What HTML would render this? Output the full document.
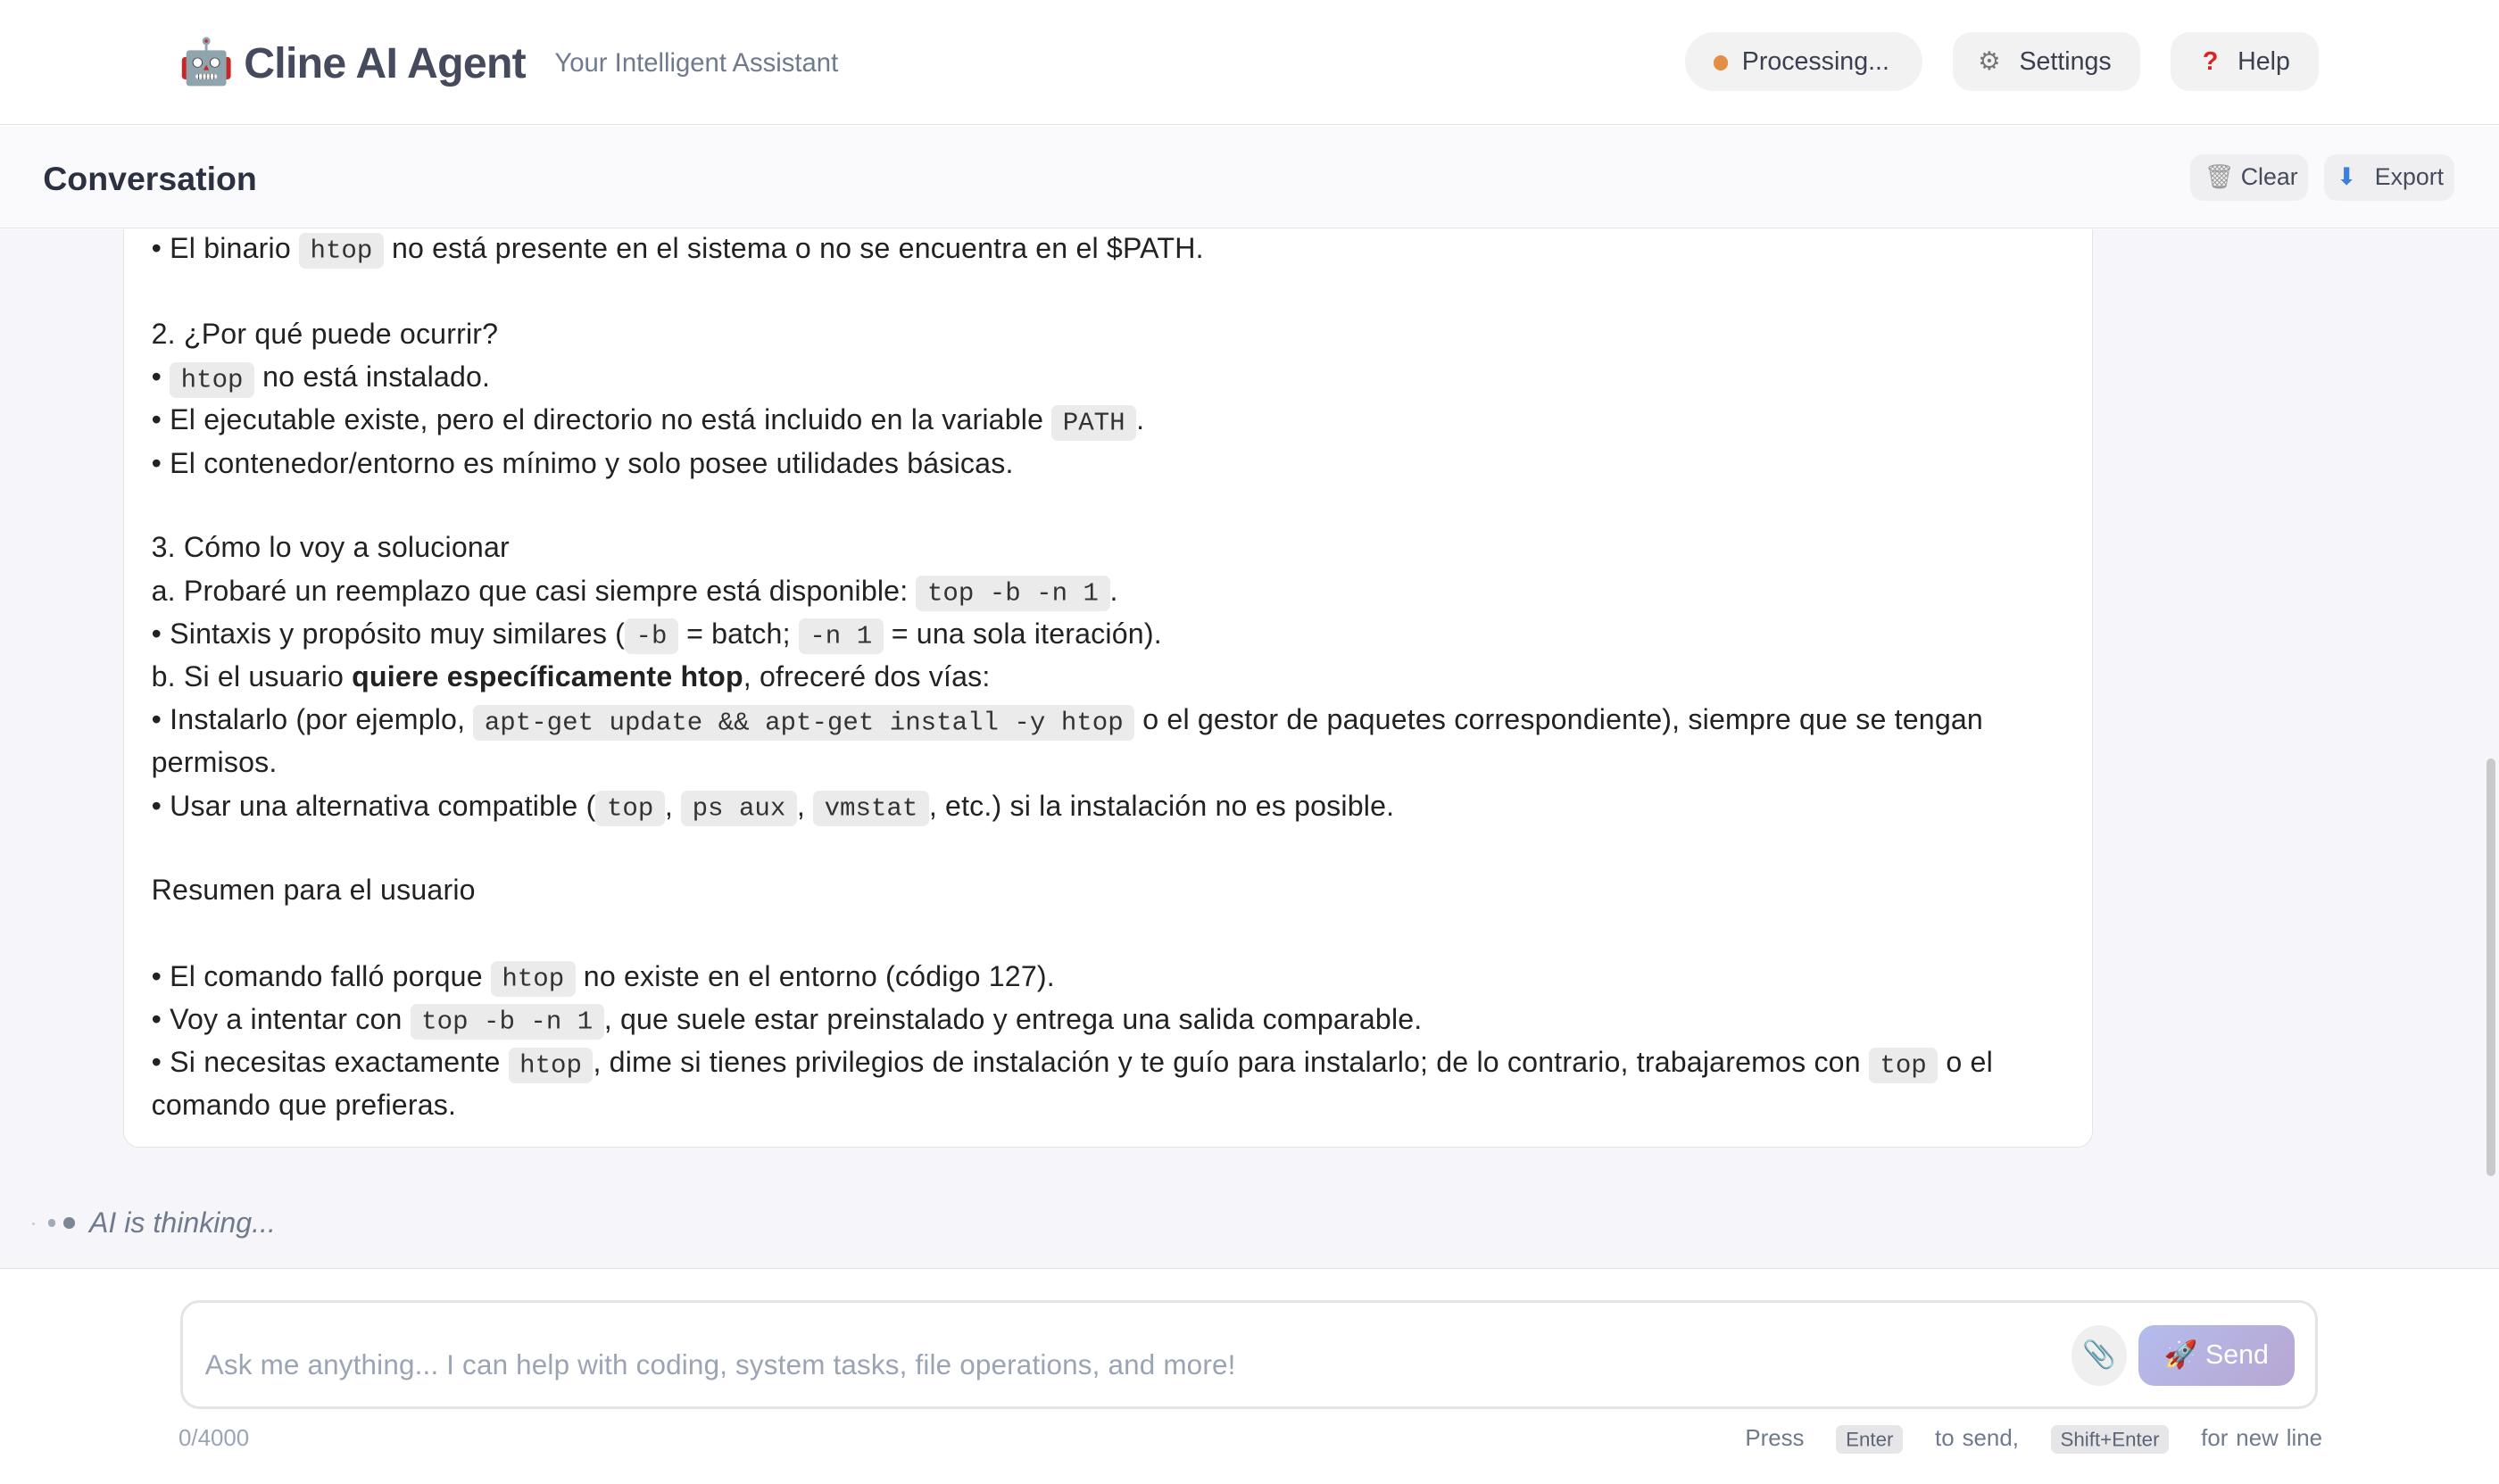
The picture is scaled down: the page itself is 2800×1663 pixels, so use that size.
<!DOCTYPE html>
<html><head><meta charset="utf-8"><style>
html{zoom:1.78572}
body{margin:0;width:1568px;height:931px;overflow:hidden;font-family:"Liberation Sans",sans-serif;background:#fff;position:relative}
.hdr{position:absolute;left:0;top:0;width:1568px;height:78px;background:#fff;border-bottom:1px solid #e3e3e3}
.logo{position:absolute;left:112px;top:22px;font-size:28px;line-height:34px}
.title{position:absolute;left:153px;top:23px;font-size:27px;font-weight:bold;color:#454b5c;line-height:34px;letter-spacing:-0.4px}
.sub{position:absolute;left:348px;top:30px;font-size:16.4px;color:#6f7a8c}
.pill{position:absolute;top:20px;height:37px;background:#f2f2f2;border-radius:12px;font-size:16px;color:#3b4050;line-height:38px}
.bar{position:absolute;left:0;top:79px;width:1568px;height:64px;background:#fafafc;border-bottom:1px solid #e3e3e3}
.bar h2{position:absolute;left:27px;top:21px;margin:0;font-size:21px;color:#2b3141}
.sb{position:absolute;top:97px;height:29px;background:#efeff1;border-radius:8px;font-size:15px;color:#454b5c;line-height:29px}
.msgs{position:absolute;left:0;top:144px;width:1568px;height:652px;background:#f6f6fa;border-bottom:1px solid #e3e3e3;overflow:hidden}
.card{position:absolute;left:77px;top:-20px;width:1235px;height:595px;background:#fff;border:1px solid #e4e4e8;border-radius:10px}
.l{position:absolute;left:95px;font-size:18px;color:#222;white-space:nowrap;line-height:27px;letter-spacing:0.1px}
code{font-family:"Liberation Mono",monospace;font-size:16.3px;background:#ebebeb;border-radius:4px;padding:2px 7px;color:#333;letter-spacing:0}
.scroll{position:absolute;left:1560px;top:332px;width:6px;height:262px;background:#c9c9cc;border-radius:3px}
.inp{position:absolute;left:113px;top:816px;width:1338px;height:65px;border:2px solid #e4e4e4;border-radius:12px;background:#fff}
.ph{position:absolute;left:14px;top:29px;font-size:17.6px;color:#9ba4b4;letter-spacing:0.1px}
.clip{position:absolute;left:1185px;top:14px;width:35px;height:38px;border-radius:50%;background:#efefef;text-align:center;line-height:38px;color:#7a8394;font-size:17px}
.send{position:absolute;left:1227px;top:14px;width:98px;height:38px;border-radius:10px;background:linear-gradient(135deg,#b4bcec,#b8a6d2);color:#fff;font-size:17px;line-height:38px;text-align:center}
.ft{position:absolute;top:895px;font-size:14.5px;color:#6f7a8c}
kbd{font-family:"Liberation Sans",sans-serif;font-size:12.5px;background:#e6e6e8;border-radius:4px;padding:2px 6px;color:#5d6575}
</style></head><body>
<div class="hdr">
<div class="logo">🤖</div>
<div class="title">Cline AI Agent</div>
<div class="sub">Your Intelligent Assistant</div>
<div class="pill" style="left:1057px;width:149px;border-radius:19px"><span style="position:absolute;left:18px;top:15px;width:9px;height:9px;border-radius:50%;background:#e38d45"></span><span style="position:absolute;left:36px">Processing...</span></div>
<div class="pill" style="left:1225px;width:118px"><span style="position:absolute;left:16px;color:#777">⚙</span><span style="position:absolute;left:42px">Settings</span></div>
<div class="pill" style="left:1362px;width:93px"><span style="position:absolute;left:20px;color:#d22;font-weight:bold">?</span><span style="position:absolute;left:42px">Help</span></div>
</div>
<div class="bar"><h2>Conversation</h2></div>
<div class="sb" style="left:1374px;width:74px"><span style="position:absolute;left:9px;color:#999">🗑</span><span style="position:absolute;left:32px">Clear</span></div>
<div class="sb" style="left:1458px;width:82px"><span style="position:absolute;left:8px;color:#3b82d6">⬇</span><span style="position:absolute;left:32px">Export</span></div>
<div class="msgs">
<div class="card"></div>
<div class="scroll"></div>
<span style="position:absolute;left:20px;top:623px;width:2px;height:2px;border-radius:50%;background:#c5cad4"></span>
<span style="position:absolute;left:30px;top:621px;width:5px;height:5px;border-radius:50%;background:#a3abb9"></span>
<span style="position:absolute;left:40px;top:620px;width:7px;height:7px;border-radius:50%;background:#7d8696"></span>
<div style="position:absolute;left:56px;top:613px;font-size:18px;color:#6f7a8c;font-style:italic">AI is thinking...</div>
</div>
<div class="l" style="top:142px">• El binario <code>htop</code> no está presente en el sistema o no se encuentra en el $PATH.</div>
<div class="l" style="top:196px">2. ¿Por qué puede ocurrir?</div>
<div class="l" style="top:223px">• <code>htop</code> no está instalado.</div>
<div class="l" style="top:250px">• El ejecutable existe, pero el directorio no está incluido en la variable <code>PATH</code>.</div>
<div class="l" style="top:277px">• El contenedor/entorno es mínimo y solo posee utilidades básicas.</div>
<div class="l" style="top:330px">3. Cómo lo voy a solucionar</div>
<div class="l" style="top:357px">a. Probaré un reemplazo que casi siempre está disponible: <code>top -b -n 1</code>.</div>
<div class="l" style="top:384px">• Sintaxis y propósito muy similares (<code>-b</code> = batch; <code>-n 1</code> = una sola iteración).</div>
<div class="l" style="top:411px">b. Si el usuario <b>quiere específicamente htop</b>, ofreceré dos vías:</div>
<div class="l" style="top:438px">• Instalarlo (por ejemplo, <code>apt-get update &amp;&amp; apt-get install -y htop</code> o el gestor de paquetes correspondiente), siempre que se tengan</div>
<div class="l" style="top:465px">permisos.</div>
<div class="l" style="top:492px">• Usar una alternativa compatible (<code>top</code>, <code>ps aux</code>, <code>vmstat</code>, etc.) si la instalación no es posible.</div>
<div class="l" style="top:545px">Resumen para el usuario</div>
<div class="l" style="top:599px">• El comando falló porque <code>htop</code> no existe en el entorno (código 127).</div>
<div class="l" style="top:626px">• Voy a intentar con <code>top -b -n 1</code>, que suele estar preinstalado y entrega una salida comparable.</div>
<div class="l" style="top:653px">• Si necesitas exactamente <code>htop</code>, dime si tienes privilegios de instalación y te guío para instalarlo; de lo contrario, trabajaremos con <code>top</code> o el</div>
<div class="l" style="top:680px">comando que prefieras.</div>
<div class="inp">
<div class="ph">Ask me anything... I can help with coding, system tasks, file operations, and more!</div>
<div class="clip">📎</div>
<div class="send">🚀 Send</div>
</div>
<div class="ft" style="left:112px;color:#9ba4b4">0/4000</div>
<div class="ft" style="left:1095px;word-spacing:1px">Press &nbsp;&nbsp;&nbsp;<kbd>Enter</kbd>&nbsp;&nbsp;&nbsp; to send, &nbsp;&nbsp;&nbsp;<kbd>Shift+Enter</kbd>&nbsp;&nbsp;&nbsp; for new line</div>
</body></html>
